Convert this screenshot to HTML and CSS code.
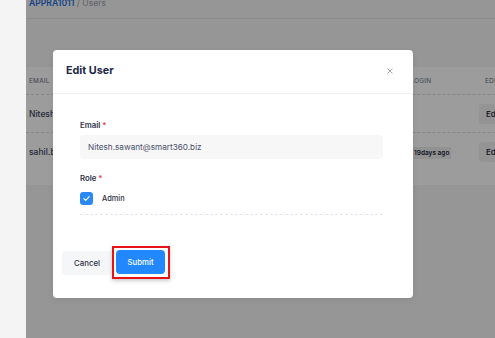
FILE: index.html
```html
<!DOCTYPE html>
<html>
<head>
<meta charset="utf-8">
<link rel="stylesheet" href="styles.css">
</head>
<body>
<aside class="sidebar"></aside>
<main class="main">
  <div class="breadcrumb"><span class="crumb-link">APPRA1011</span> / Users</div>
  <div class="page-head"></div>
  <div class="table">
    <div class="row head">
      <div class="c-email">EMAIL</div>
      <div class="c-login">LAST LOGIN</div>
      <div class="c-edit">EDIT</div>
    </div>
    <div class="row">
      <div class="c-email name">Nitesh.sawant@smart360.biz</div>
      <div class="c-login"></div>
      <div class="c-edit"><span class="edit-btn">Edit</span></div>
    </div>
    <div class="row last">
      <div class="c-email name">sahil.b@smart360.biz</div>
      <div class="c-login"><span class="badge">19days ago</span></div>
      <div class="c-edit"><span class="edit-btn">Edit</span></div>
    </div>
  </div>
  <div class="overlay"></div>
</main>

<div class="modal">
  <div class="modal-head">
    <h2 class="modal-title">Edit User</h2>
    <svg class="close" width="6" height="6" viewBox="0 0 6 6"><path d="M0.5 0.5 L5.5 5.5 M5.5 0.5 L0.5 5.5" stroke="#9aa0b0" stroke-width="0.9" fill="none"/></svg>
  </div>
  <div class="modal-body">
    <label class="label">Email <span class="req">*</span></label>
    <div class="input">Nitesh.sawant@smart360.biz</div>
    <label class="label role">Role <span class="req">*</span></label>
    <div class="check-row">
      <span class="checkbox"><svg width="9" height="9" viewBox="0 0 9 9"><path d="M1.8 4.6 L3.7 6.4 L7.2 2.6" stroke="#fff" stroke-width="1.2" fill="none" stroke-linecap="round" stroke-linejoin="round"/></svg></span>
      <span class="check-label">Admin</span>
    </div>
    <div class="dashed"></div>
  </div>
  <div class="modal-foot">
    <button class="btn cancel">Cancel</button>
    <span class="highlight"><button class="btn submit">Submit</button></span>
  </div>
</div>
</body>
</html>
```
FILE: styles.css
```css
* { box-sizing: border-box; }
html, body { margin: 0; padding: 0; }
body {
  width: 495px;
  height: 338px;
  overflow: hidden;
  display: flex;
  font-family: Inter, "Noto Sans", sans-serif;
  background: #f4f4f4;
}
.sidebar {
  width: 26px;
  flex: none;
  background: #f4f4f4;
}
.main {
  flex: 1;
  position: relative;
  background: #f5f5f5;
  overflow: hidden;
}
.breadcrumb {
  margin-top: -3px;
  padding-left: 3px;
  font-size: 8.6px;
  line-height: 12px;
  color: #9aa0ad;
}
.crumb-link { color: #1f6fe0; font-weight: 600; }
.page-head {
  height: 10px;
  border-bottom: 1px solid #e4e4e4;
  background: #f5f5f5;
}
.table {
  margin-top: 48px;
  background: #fff;
  width: 600px;
}
.row {
  display: flex;
  align-items: center;
  height: 38px;
  border-bottom: 1px dashed #dcdcdc;
  font-size: 9px;
}
.row.head {
  height: 28px;
  font-size: 6.5px;
  color: #6b7080;
  letter-spacing: 0.2px;
}
.row.last { height: 52px; border-bottom: none; padding-bottom: 14px; }
.c-email { width: 379px; padding-left: 3px; flex: none; }
.row.head .c-email { width: 365px; }
.c-login { width: 74px; flex: none; }
.row.head .c-login { width: 88px; }
.c-edit { width: 100px; flex: none; }
.row.head .c-edit { padding-left: 6px; }
.name { font-size: 8.5px; color: #3a4560; font-weight: 500; }
.badge {
  display: inline-block;
  background: #eeeeee;
  color: #22283a;
  font-size: 6.5px;
  font-weight: 600;
  padding: 2px 2px;
  margin-left: 7px;
}
.edit-btn {
  display: inline-block;
  background: #f2f2f2;
  color: #2a3148;
  font-weight: 600;
  font-size: 8px;
  padding: 5px 6px 5px 7px;
  border-radius: 3px;
}
.overlay {
  position: absolute;
  inset: 0;
  background: rgba(0, 0, 0, 0.39);
}
.modal {
  position: absolute;
  left: 53px;
  top: 50px;
  width: 360px;
  height: 248px;
  background: #fff;
  border-radius: 4px;
  display: flex;
  flex-direction: column;
  box-shadow: 0 2px 6px rgba(0,0,0,0.08);
}
.modal-head {
  height: 44px;
  flex: none;
  display: flex;
  align-items: center;
  justify-content: space-between;
  padding: 0 20px 0 13px;
  border-bottom: 1px solid #f0f0f2;
}
.modal-title {
  margin: 0;
  font-size: 10.8px;
  font-weight: 700;
  color: #1d2746;
  margin-top: -3px;
}
.close { margin-top: -1px; }
.modal-body {
  padding: 25px 30px 0 27px;
  display: flex;
  flex-direction: column;
}
.label {
  font-size: 7.8px;
  font-weight: 600;
  color: #2d3142;
  line-height: 12px;
}
.req { color: #f0304a; }
.input {
  margin-top: 4px;
  height: 24px;
  background: #f7f7f8;
  border-radius: 4px;
  padding-left: 8px;
  font-size: 8.2px;
  color: #4a5068;
  display: flex;
  align-items: center;
}
.label.role { margin-top: 13px; }
.check-row {
  display: flex;
  align-items: center;
  margin-top: 8px;
  height: 13px;
}
.checkbox {
  width: 13px;
  height: 13px;
  border-radius: 3px;
  background: #2b89f6;
  display: flex;
  align-items: center;
  justify-content: center;
}
.check-label {
  margin-left: 9px;
  font-size: 7.4px;
  font-weight: 500;
  color: #2d3142;
}
.dashed {
  margin-top: 9px;
  border-top: 1px dashed #e4e4f2;
}
.modal-foot {
  margin-top: auto;
  padding: 0 0 19px 9px;
  display: flex;
  align-items: center;
}
.btn {
  font-family: inherit;
  border: none;
  height: 24px;
  border-radius: 4px;
  font-size: 7.8px;
  font-weight: 500;
  cursor: pointer;
}
.cancel {
  width: 50px;
  background: #f5f6f8;
  color: #2d3142;
}
.highlight {
  display: inline-flex;
  padding: 2px 3px 3px 2px;
  border: 2px solid #e8131a;
  box-shadow: 0 2px 4px rgba(0,0,0,0.2);
}
.submit {
  width: 49px;
  background: #2288ff;
  color: #fff;
}
```
